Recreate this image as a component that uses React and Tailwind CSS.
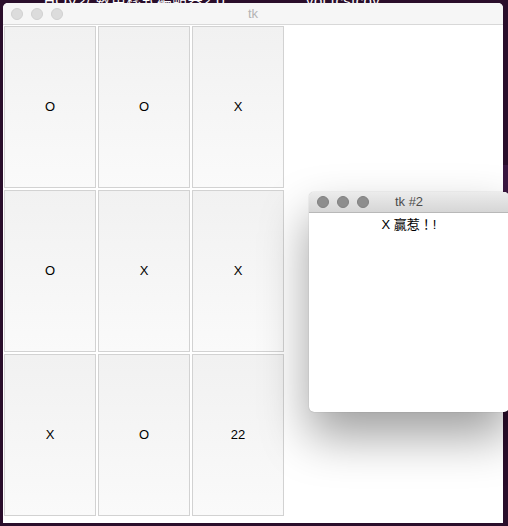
import React from "react";

const board = ["O", "O", "X", "O", "X", "X", "X", "O", "22"];

function Lights({ active }) {
  const dot = active
    ? "w-3 h-3 rounded-full bg-[#8e8e8e] border border-[#808080]"
    : "w-3 h-3 rounded-full bg-[#dcdcdc] border border-[#d0d0d0]";
  return (
    <div className="absolute left-[8px] top-0 h-full flex items-center gap-2">
      <span className={dot}></span>
      <span className={dot}></span>
      <span className={dot}></span>
    </div>
  );
}

export default function App() {
  return (
    <div
      className="relative w-[508px] h-[526px] overflow-hidden bg-[#2a0e2b]"
      style={{ fontFamily: '"Liberation Sans", "Noto Sans CJK TC", sans-serif' }}
    >
      {/* desktop text peeking above the window */}
      <div className="absolute left-[44px] top-[-10px] text-white text-[15px] tracking-wide">
        HOV2/ 數用樣式編輯器2.0
      </div>
      <div className="absolute left-[306px] top-[-10px] text-white text-[15px] tracking-wide">
        voi tcstcov
      </div>
      <div className="absolute right-0 top-[165px] w-[6px] h-[30px] bg-[#3a1740]"></div>

      {/* main window */}
      <div className="relative ml-[3px] mt-[3px] w-[500px] h-[520px] bg-white rounded-t-[5px] overflow-hidden">
        <div className="relative h-[22px] bg-[#f6f6f6] border-b border-[#d8d8d8] flex items-center justify-center">
          <Lights />
          <span className="text-[13px] text-[#b4b4b4]">tk</span>
        </div>
        <div className="grid grid-cols-[92px_92px_92px] grid-rows-[162px_162px_162px] gap-[2px] pl-[1px] pt-[1px]">
          {board.map((v, i) => (
            <div
              key={i}
              className="border border-[#d2d2d2] bg-gradient-to-b from-[#f1f1f1] to-[#fafafa] flex items-center justify-center text-[13px] text-black"
            >
              {v}
            </div>
          ))}
        </div>
      </div>

      {/* second window */}
      <div className="absolute left-[309px] top-[192px] w-[200px] h-[220px] bg-white rounded-[5px] shadow-[0_24px_48px_rgba(0,0,0,0.38),0_0_1px_rgba(0,0,0,0.4)] overflow-hidden">
        <div className="relative h-[21px] bg-gradient-to-b from-[#ececec] to-[#d6d6d6] border-b border-[#b8b8b8] flex items-center justify-center">
          <Lights active />
          <span className="text-[13px] text-[#4d4d4d]">tk #2</span>
        </div>
        <div className="text-center text-[13px] text-black pt-[2px]">X 贏惹！!</div>
      </div>
    </div>
  );
}
